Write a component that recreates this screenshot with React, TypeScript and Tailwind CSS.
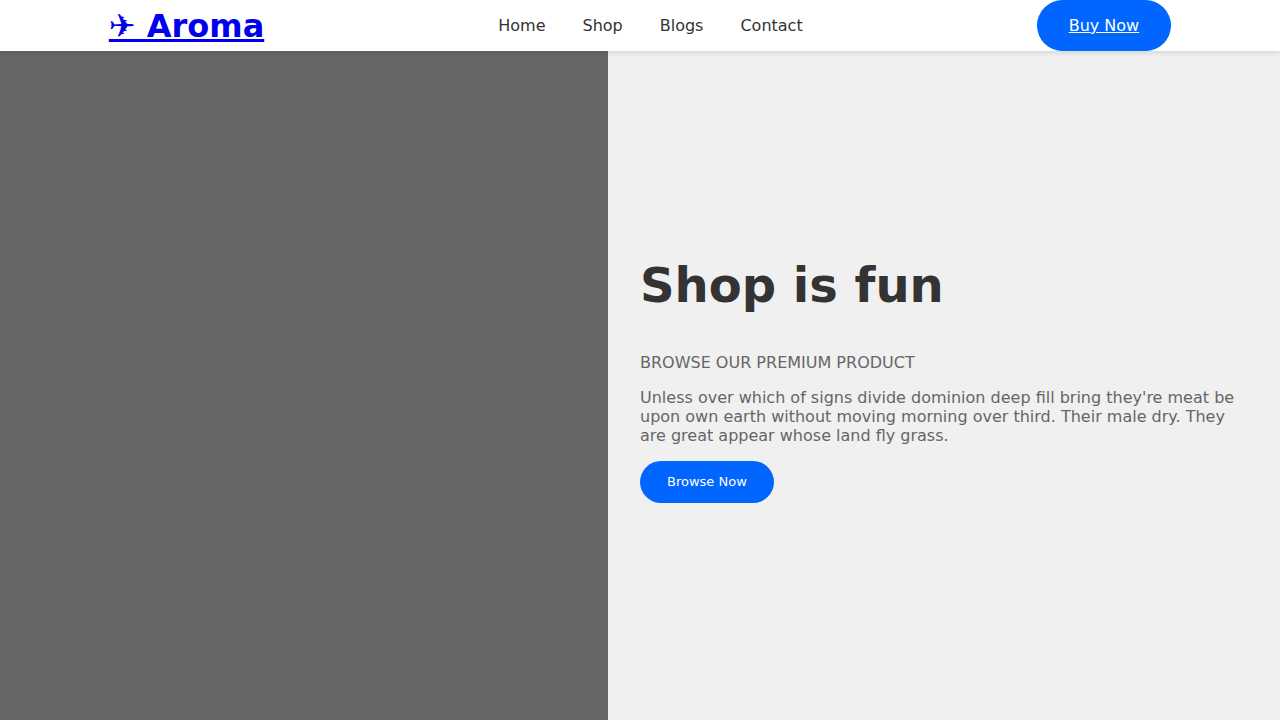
const links = ["Home", "Shop", "Blogs", "Contact"];

export default function App() {
  return (
    <div className="flex min-h-screen flex-col bg-[#f0f0f0] font-['DejaVu_Sans',sans-serif] text-base text-[#666666]">
      <header className="relative z-10 flex h-[51px] items-center justify-between bg-white px-[8.5%] shadow-[0_2px_5px_rgba(0,0,0,0.1)]">
        <a href="#" className="text-[32px] leading-[38px] font-bold text-[#0000ee] underline decoration-[3px]">
          ✈ Aroma
        </a>
        <nav className="flex gap-[37px]">
          {links.map((label) => (
            <a key={label} href="#" className="leading-[19px] text-[#333333]">
              {label}
            </a>
          ))}
        </nav>
        <a href="#" className="rounded-full bg-[#0066ff] px-8 py-4 leading-[19px] text-white underline">
          Buy Now
        </a>
      </header>
      <main className="flex flex-1">
        <div className="w-[47.5%] shrink-0 bg-[#666666]" />
        <section className="flex flex-1 flex-col items-start justify-center px-8 pb-[11px]">
          <h1 className="text-5xl leading-[56px] font-bold text-[#333333]">Shop is fun</h1>
          <p className="mt-10 leading-[19px]">BROWSE OUR PREMIUM PRODUCT</p>
          <p className="mt-4 leading-[19px]">
            Unless over which of signs divide dominion deep fill bring they're meat be upon own earth without moving
            morning over third. Their male dry. They are great appear whose land fly grass.
          </p>
          <button type="button" className="mt-4 h-[42px] rounded-full bg-[#0066ff] px-[27px] text-[13px] text-white">
            Browse Now
          </button>
        </section>
      </main>
    </div>
  );
}
